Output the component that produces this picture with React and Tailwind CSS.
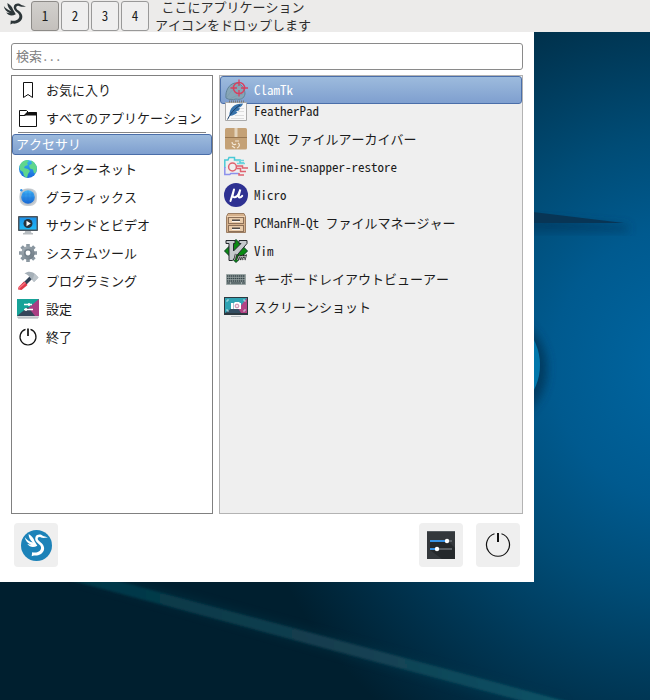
const FONT = "font-['Noto_Sans_Mono_CJK_JP','Noto_Sans_CJK_JP',sans-serif]";

function Bird({ size, color }) {
  return (
    <svg width={size} height={size} viewBox="0 0 24 24" fill={color} aria-hidden="true">
      <path d="M23 4.400C21 3.600 19.200 3.400 18 2.700 16 .9 12.200 1 11 3.800 10 6.400 11.600 8.600 13.800 10.200 17 12.400 17.200 15.400 14.600 17.600 12.600 19.100 10 18.900 7.800 18.500L7.400 22.400 9.500 21.500C13.500 22.200 17.700 20.200 19 16.800 20.200 13.400 18.200 10.600 15.800 8.800 13.400 7.200 12.600 5.600 13.500 4.400 14.400 3.500 16 3.700 17 4.600 18.500 5 20.500 4.500 23 4.400Z" />
      <path d="M4.400 1C7.400 3 9.400 5 10 7.600L12.800 12.200C9 14.400 5.600 13.800 3.200 10.600L7 11.300C3.800 10 1.300 7.600.8 4 2.600 6.400 5 8.200 8.400 9.200 6 7 4.400 4.400 4.400 1Z" />
    </svg>
  );
}

function Svg({ children }) {
  return (
    <svg className="shrink-0" width="24" height="24" viewBox="0 0 24 24" fill="none" aria-hidden="true">
      {children}
    </svg>
  );
}

const icons = {
  bookmark: (
    <Svg>
      <path d="M7.500 4.500h9v15l-4.500-3-4.500 3z" stroke="#111" />
    </Svg>
  ),
  folder: (
    <Svg>
      <path d="M3.500 20.500v-16h7l2 2h8v14z" stroke="#111" />
      <path d="M4 9h4l3.500-3.500 1 1H21v3H10L8.500 10H4z" fill="#111" />
    </Svg>
  ),
  globe: (
    <Svg>
      <defs>
        <linearGradient id="sea" x2="0" y2="1"><stop stopColor="#35b5f1" /><stop offset="1" stopColor="#1a68dc" /></linearGradient>
      </defs>
      <circle cx="12" cy="12" r="9" fill="url(#sea)" />
      <path d="M3.500 9C5 5 8 3 11 3l2 1-2 2 1 2-3 1-1 2 4 1 2 2-2 3-1 4-3-2-1-4-3-2zM15 3.500c3 1 5 4 6 7l-1 5-2 1-1-4-3-1-1-3 3-2z" fill="#5fd68d" />
    </Svg>
  ),
  graphics: (
    <Svg>
      <defs>
        <linearGradient id="lens" x2="0" y2="1"><stop stopColor="#43b5f6" /><stop offset="1" stopColor="#1766d4" /></linearGradient>
      </defs>
      <rect x="3.500" y="3.500" width="17.500" height="17.500" rx="7" fill="#c9cfd4" />
      <circle cx="12" cy="12" r="8.300" fill="#bcc3c9" />
      <circle cx="12" cy="12" r="6.800" fill="url(#lens)" />
      <path d="M8 7v10M12 5.500v13M16 7v10M6 9h12M5.500 13h13" stroke="#1672d5" strokeOpacity=".35" strokeWidth=".7" />
      <circle cx="5.300" cy="5.300" r="1.200" fill="#2992ef" />
    </Svg>
  ),
  media: (
    <Svg>
      <defs>
        <linearGradient id="screen" x2="0" y2="1"><stop stopColor="#1b91ea" /><stop offset="1" stopColor="#20b9f5" /></linearGradient>
      </defs>
      <path d="M9.500 17h5l1 3H17v1.500H7V20h1.500z" fill="#b7bcc0" />
      <rect x="2" y="3" width="20" height="15" rx=".7" fill="#4b555e" />
      <rect x="3.500" y="4.500" width="17" height="12" fill="url(#screen)" />
      <circle cx="12" cy="10.500" r="4.500" fill="#27333d" />
      <path d="m10.500 7.700 4.300 2.800-4.300 2.800z" fill="#fff" />
    </Svg>
  ),
  gear: (
    <Svg>
      <defs>
        <linearGradient id="steel" x2="1" y2="1"><stop stopColor="#a9b3ba" /><stop offset="1" stopColor="#68757f" /></linearGradient>
      </defs>
      <path d="M5.600 5.600l12.800 12.800M18.400 5.600 5.600 18.400" stroke="#8996a0" strokeWidth="3.600" />
      <path d="M10.200 3h3.600v18h-3.600zM3 10.200h18v3.600H3z" fill="#8d99a2" />
      <circle cx="12" cy="12" r="6.700" fill="url(#steel)" />
      <circle cx="12" cy="12" r="4" fill="#75828c" />
      <circle cx="12" cy="12" r="2.400" fill="#fff" />
    </Svg>
  ),
  hammer: (
    <Svg>
      <path d="m14 7 2.500 2.500-8 8L6 15z" fill="#2f4054" />
      <path d="M8 12.500 11.500 16 5.500 21 2 20.500 2.500 18z" fill="#e03a4a" />
      <path d="m3 18 6-5 1 1-7 6z" fill="#f47480" />
      <path d="M8.500 4.500C12 1.800 16 2.500 18.500 4.500l4 4-4.500 4.500-4.500-5C12 6 10.500 5 8.500 4.500z" fill="#a6b0b8" />
      <path d="m18.500 4.500 4 4-4.500 4.500-1.500-2z" fill="#bcc4ca" />
    </Svg>
  ),
  settings: (
    <Svg>
      <path d="M1 2h22v17H1z" fill="#17a398" />
      <path d="M23 2v17H3z" fill="#a93d83" />
      <path d="M1 19 12 10l7 9z" fill="#35465a" />
      <path d="M1 19h22v2H1z" fill="#d3d8da" />
      <path d="M8 7.500h8m-3-1.500v3M8 12.500h9m-7-1.500v3" stroke="#fff" strokeWidth="1.500" />
      <path d="M2 21h20" stroke="#a4abb0" />
    </Svg>
  ),
  power: (
    <Svg>
      <path d="M9.500 4.400a8 8 0 1 0 5 0" stroke="#111" strokeWidth="1.200" />
      <path d="M12 3.500V11" stroke="#111" strokeWidth="1.700" />
    </Svg>
  ),
  clam: (
    <Svg>
      <path d="M2 20C1 13 5 6 11 5c6 0 10 5 10 11-1 5-5 6-9 5-3 1-7 1-10-1z" fill="#86a5b6" stroke="#62849a" />
      <path d="M3 19c3-5 7-9 12-12M6 21c3-2 8-4 13-5" stroke="#7899ac" strokeWidth=".6" />
      <circle cx="15" cy="10" r="5.600" stroke="#d8405f" strokeWidth="1.500" />
      <path d="M15 1.500V8m0 4v6.500M6.500 10H13m4 0h7" stroke="#d8405f" strokeWidth="1.300" />
    </Svg>
  ),
  feather: (
    <Svg>
      <path d="M1.500 3.500h21v18h-21z" fill="#f8f8f8" stroke="#aaa" />
      <path d="M5 2.500h15" stroke="#777" strokeDasharray="1 1" strokeWidth="2" />
      <path d="M14 9.500h6m-6 3h6m-9 4h9m-13 3h13" stroke="#d5d5d5" strokeWidth=".8" />
      <path d="M19 4.500C10 4.500 5 9 5.500 17c4-.5 7-2 8-4l-2-.4 3.500-1 1-2.300-2-.3c3-1 4.500-2.500 5-4.500z" fill="#3772aa" />
      <path d="M3.500 20.500C6 15 10 10 16 6" stroke="#183f69" />
    </Svg>
  ),
  archive: (
    <Svg>
      <rect x="1" y="1" width="22" height="21.500" rx="1.500" fill="#c4a176" />
      <path d="M1 10h22v1H1z" fill="#987650" />
      <path d="M10.500 1h3v9h-3z" fill="#e4d4bd" />
      <path d="M8 15c0 3 3 3 4 2m-4 2 3 2m0-7h4m-1 2c2 1 2 4-1 5" stroke="#f4e9d8" strokeWidth="1.200" />
    </Svg>
  ),
  limine: (
    <Svg>
      <path d="M.8 13V5H4l1-2.500h5.500V5H16v3h4" stroke="#49c9d6" strokeWidth="1.500" />
      <path d="M.8 12v7.500h5l1-1h8" stroke="#8b91ec" strokeWidth="1.500" />
      <path d="M12 5.500h8M13 8.500h8" stroke="#6fd5de" strokeWidth="1.500" />
      <circle cx="8.500" cy="12" r="3.900" stroke="#df626f" strokeWidth="1.500" />
      <path d="M12.500 11h6v2H24M12.500 13.500h4v3H22M15 18v2h5" stroke="#df626f" strokeWidth="1.500" />
    </Svg>
  ),
  micro: (
    <Svg>
      <circle cx="12" cy="12" r="12" fill="#2e3192" />
      <path d="M10 6.500 6.500 18M10 6.500 8.700 12c-.7 3.500 4.500 3 6-1.500l1.600-4-1.500 6c-.8 2.700 1.800 2.500 3.400.3" stroke="#fff" strokeWidth="2" strokeLinecap="round" />
    </Svg>
  ),
  cabinet: (
    <Svg>
      <path d="M4 2.500h16l1.500 3V21.500h-19v-16z" fill="#d5b18c" stroke="#9b7d62" />
      <path d="M3 5.500h18" stroke="#f0d4b5" />
      <rect x="4.500" y="6.500" width="15" height="6" fill="#e8cbaa" stroke="#8d7058" />
      <rect x="4.500" y="14.500" width="15" height="6" fill="#e8cbaa" stroke="#8d7058" />
      <path d="M8 8.500h8v1.500H8zM8 16.500h8v1.500H8z" fill="#4f4b48" />
      <path d="M8 10.500h8m-8 8h8" stroke="#fff" strokeWidth=".8" />
    </Svg>
  ),
  vim: (
    <Svg>
      <path d="m12 .5 11.500 11.500L12 23.500.5 12z" fill="#0a8a12" stroke="#073b20" />
      <path d="M2 1.500h9v3H9.500V12L17 4.500h-2v-3h8v3L8.500 21.500H5V4.500H2z" fill="#c5c9cc" stroke="#24292d" />
      <path d="m12 15-1.500 6m3 0 1.500-4 1.500.5-1 3.500m1-3 2-1-1 4m1-3 3-1-1 4" stroke="#222" strokeWidth="2.200" />
      <path d="m12 15-1.500 6m3 0 1.500-4 1.500.5-1 3.500m1-3 2-1-1 4m1-3 3-1-1 4" stroke="#d1d3d4" strokeWidth=".8" />
    </Svg>
  ),
  keyboard: (
    <Svg>
      <rect x="2" y="7" width="20" height="11" rx=".7" fill="#9aa5a4" />
      <path d="M3 9h18M3 11.500h18M3 14h18" stroke="#36464a" strokeWidth="1.700" strokeDasharray="1.500 .5" />
      <path d="M3 16h3m1 0h10m1 0h3" stroke="#4f5e60" strokeWidth="1.500" />
    </Svg>
  ),
  screenshot: (
    <Svg>
      <path d="M7 21.500h10" stroke="#b8bfc2" />
      <path d="M0 2h24v18H0z" fill="#2c3940" />
      <path d="M1 3h22v15H1z" fill="#2fa3b3" />
      <path d="M23 3v15H11z" fill="#b34384" />
      <path d="M1 18 12 10l5 8z" fill="#334d60" />
      <path d="M3 7V5h2m14 0h2v2m0 7v2h-2M5 16H3v-2" stroke="#cde9eb" strokeWidth=".8" />
      <path d="M7 8h3l1-1h4l1 1h1v6H7z" fill="#fff" />
      <circle cx="13" cy="11" r="1.900" fill="#f3e4ec" stroke="#c06b98" strokeWidth=".8" />
      <path d="M9.500 8v6" stroke="#81aebb" strokeWidth=".7" />
    </Svg>
  ),
};

const topCategories = [
  ["bookmark", "お気に入り"],
  ["folder", "すべてのアプリケーション"],
];
const categories = [
  ["globe", "インターネット"],
  ["graphics", "グラフィックス"],
  ["media", "サウンドとビデオ"],
  ["gear", "システムツール"],
  ["hammer", "プログラミング"],
  ["settings", "設定"],
  ["power", "終了"],
];
const apps = [
  ["feather", "FeatherPad"],
  ["archive", "LXQt ファイルアーカイバー"],
  ["limine", "Limine-snapper-restore"],
  ["micro", "Micro"],
  ["cabinet", "PCManFM-Qt ファイルマネージャー"],
  ["vim", "Vim"],
  ["keyboard", "キーボードレイアウトビューアー"],
  ["screenshot", "スクリーンショット"],
];

function Row({ icon, label }) {
  return (
    <button type="button" className="flex h-7 w-full items-center gap-1.5 px-1 text-left whitespace-nowrap">
      {icons[icon]}
      <span className="pb-0.5">{label}</span>
    </button>
  );
}

function Wallpaper() {
  return (
    <svg className="absolute inset-0 -z-10 h-full w-full" viewBox="0 0 650 700" preserveAspectRatio="xMaxYMin slice" aria-hidden="true">
      <defs>
        <radialGradient id="sky" gradientUnits="userSpaceOnUse" cx="690" cy="365" r="460">
          <stop stopColor="#0067a3" />
          <stop offset=".3" stopColor="#005a8f" />
          <stop offset=".5" stopColor="#004c76" />
          <stop offset=".75" stopColor="#003552" />
          <stop offset="1" stopColor="#001f2f" />
        </radialGradient>
        <linearGradient id="beam" x1="80" x2="560" gradientUnits="userSpaceOnUse">
          <stop stopColor="#003847" />
          <stop offset=".55" stopColor="#163f50" />
          <stop offset="1" stopColor="#075266" />
        </linearGradient>
        <filter id="soft" x="-30%" y="-30%" width="160%" height="160%"><feGaussianBlur stdDeviation="5" /></filter>
        <filter id="edge"><feGaussianBlur stdDeviation="1" /></filter>
      </defs>
      <path d="M0 0h650v700H0z" fill="url(#sky)" />
      <path d="M70 578h50l450 124h-60z" fill="#004a5c" opacity=".25" filter="url(#soft)" />
      <path d="M62 578h44L576 704h-42z" fill="url(#beam)" filter="url(#edge)" />
      <path d="M500 216 628 226v5H500z" fill="#003b62" opacity=".8" filter="url(#soft)" />
      <path d="M500 208 624 223H500z" fill="#083555" />
      <circle cx="489" cy="369" r="58" fill="#003656" opacity=".8" filter="url(#soft)" />
      <circle cx="485" cy="365" r="55" fill="#0077ab" />
    </svg>
  );
}

export default function App() {
  return (
    <div className={`relative isolate min-h-screen overflow-hidden text-[13px] leading-[19px] text-[#1c1c1c] ${FONT}`}>
      <Wallpaper />
      <header className="flex h-8 items-center bg-[#ecebea] pl-[3px]">
        <button type="button" aria-label="メニュー" className="mr-1 flex h-8 w-6 items-center pb-1">
          <Bird size={24} color="#2d3639" />
        </button>
        <nav className="flex gap-0.5">
          <button type="button" className="h-[30px] w-7 rounded-[3px] border border-[#8d8b88] bg-linear-to-b from-[#d2d0cd] to-[#c4c0bc] pb-0.5">1</button>
          <button type="button" className="h-[30px] w-7 rounded-[3px] border border-[#999] bg-[#efefef] pb-0.5">2</button>
          <button type="button" className="h-[30px] w-7 rounded-[3px] border border-[#999] bg-[#efefef] pb-0.5">3</button>
          <button type="button" className="h-[30px] w-7 rounded-[3px] border border-[#999] bg-[#efefef] pb-0.5">4</button>
        </nav>
        <p className="ml-1.5 text-center leading-[18px] whitespace-nowrap text-[#2e2e2e]">
          ここにアプリケーション
          <br />
          アイコンをドロップします
        </p>
      </header>

      <main className="w-[534px] max-w-full bg-white px-[11px] pt-[11px] pb-[15px]">
        <input
          type="search"
          aria-label="検索"
          placeholder="検索..."
          className="block h-[27px] w-full rounded-[3px] border border-[#8a8a8a] bg-white px-1 pb-0.5 placeholder:text-[#808080]"
        />
        <div className="mt-[5px] flex h-[439px] gap-1.5">
          <div className="w-[202px] shrink-0 border border-[#808080] bg-white">
            {topCategories.map(([icon, label]) => <Row key={label} icon={icon} label={label} />)}
            <hr className="mx-1.5 mb-px border-[#858585]" />
            <button type="button" className="flex h-[21px] w-full items-center rounded-[3px] border border-[#4a6ea9] bg-linear-to-b from-[#9dbbdd] to-[#7f9fcf] px-[3px] pb-0.5 text-white">
              アクセサリ
            </button>
            {categories.map(([icon, label]) => <Row key={label} icon={icon} label={label} />)}
          </div>
          <div className="min-w-0 flex-1 border border-[#b3b3b3] bg-[#efefef]">
            <button type="button" className="flex h-7 w-full items-center gap-1.5 rounded-[3px] border border-[#4a6ea9] bg-linear-to-b from-[#9dbbdd] to-[#7f9fcf] px-[3px] text-white">
              {icons.clam}
              <span className="pb-0.5">ClamTk</span>
            </button>
            <div className="-mt-[7px]">
              {apps.map(([icon, label]) => <Row key={label} icon={icon} label={label} />)}
            </div>
          </div>
        </div>
        <footer className="mt-[9px] flex gap-[13px] px-[3px]">
          <button type="button" aria-label="LXQt" className="mr-auto flex size-11 items-center justify-center rounded bg-[#efefef]">
            <span className="flex size-[31px] items-center justify-center rounded-full bg-[#1c82b8]">
              <Bird size={25} color="#fff" />
            </span>
          </button>
          <button type="button" aria-label="設定" className="flex size-11 items-center justify-center rounded bg-[#efefef]">
            <svg width="28" height="28" viewBox="0 0 28 28" aria-hidden="true">
              <path d="M0 0h28v28H0z" fill="#33373b" />
              <path d="m3 11 17-2 8 8v11H15L3 19z" fill="#25292c" />
              <path d="M0 .5h28" stroke="#555b60" />
              <path d="M20 10h5M10 18h15" stroke="#5b6065" strokeWidth="2" />
              <path d="M3 10h17M3 18h7" stroke="#3793e6" strokeWidth="2" />
              <circle cx="20" cy="10" r="2.200" fill="#fff" />
              <circle cx="10" cy="18" r="2.200" fill="#fff" />
            </svg>
          </button>
          <button type="button" aria-label="終了" className="flex size-11 items-center justify-center rounded bg-[#efefef]">
            <svg width="28" height="28" viewBox="0 0 28 28" fill="none" stroke="#111" aria-hidden="true">
              <path d="M10.500 2.800a11.500 11.500 0 1 0 7 0" strokeWidth="1.200" />
              <path d="M14 2v9" strokeWidth="2" />
            </svg>
          </button>
        </footer>
      </main>
    </div>
  );
}
